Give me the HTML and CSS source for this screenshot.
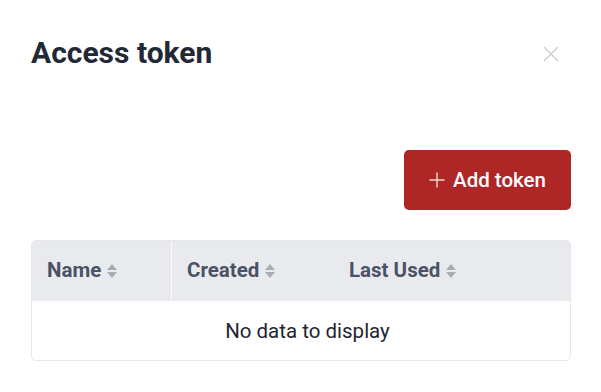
FILE: index.html
```html
<!DOCTYPE html>
<html>
<head>
<meta charset="utf-8">
<link rel="stylesheet" href="styles.css">
</head>
<body>
<div class="modal">
  <div class="modal-header">
    <h1 class="title">Access token</h1>
    <button class="close" aria-label="Close">
      <svg width="16" height="16" viewBox="0 0 16 16"><path d="M1 1L15 15M15 1L1 15" stroke="#c9ccd3" stroke-width="1.3" fill="none"/></svg>
    </button>
  </div>
  <div class="actions">
    <button class="btn-add">
      <svg width="16" height="16" viewBox="0 0 16 16"><path d="M8 0.5V15.5M0.5 8H15.5" stroke="#f4d4d4" stroke-width="1.4" fill="none"/></svg>
      <span>Add token</span>
    </button>
  </div>
  <div class="table">
    <div class="thead">
      <div class="th col-name">Name <span class="sort"><i class="up"></i><i class="down"></i></span></div>
      <div class="th col-created">Created <span class="sort"><i class="up"></i><i class="down"></i></span></div>
      <div class="th col-used">Last Used <span class="sort"><i class="up"></i><i class="down"></i></span></div>
    </div>
    <div class="empty">No data to display</div>
  </div>
</div>
</body>
</html>
```

FILE: styles.css
```css
* { box-sizing: border-box; }
html, body { margin: 0; padding: 0; background: #fff; }
body { font-family: Roboto, "Liberation Sans", sans-serif; color: #1f2430; }
.modal { width: 601px; padding: 31px 30px 0 31px; }
.modal-header { display: flex; justify-content: space-between; align-items: flex-start; height: 119px; }
.title { margin: 0; font-size: 30px; font-weight: 700; color: #222936; line-height: 44px; }
.close { border: 0; background: none; padding: 0; margin: 15px 12px 0 0; width: 16px; height: 16px; display: flex; }
.actions { display: flex; justify-content: flex-end; }
.btn-add { display: flex; align-items: center; gap: 8px; height: 60px; width: 167px; justify-content: center; border: 0; border-radius: 5px; background: #ae2626; color: #fff; font-family: Roboto, "Liberation Sans", sans-serif; font-size: 20.5px; font-weight: 500; padding: 0 0 0 0; }
.table { margin-top: 30px; width: 540px; border: 1px solid #e6e7eb; border-radius: 5px; overflow: hidden; }
.thead { display: flex; height: 60px; background: #e9eaee; }
.th { display: flex; align-items: center; gap: 6px; padding-left: 15px; padding-bottom: 2px; font-size: 20.5px; font-weight: 700; color: #4a5366; }
.col-name { width: 140px; border-right: 1px solid #fafafb; }
.col-created { width: 162px; }
.col-used { flex: 1; }
.sort { display: inline-flex; flex-direction: column; gap: 2px; margin-top: 1px; }
.sort i { display: block; width: 0; height: 0; border-left: 5px solid transparent; border-right: 5px solid transparent; }
.sort .up { border-bottom: 6px solid #a9acb5; }
.sort .down { border-top: 6px solid #a9acb5; }
.empty { height: 59px; display: flex; align-items: center; justify-content: center; padding-left: 13px; font-size: 20.5px; color: #222630; }
```
